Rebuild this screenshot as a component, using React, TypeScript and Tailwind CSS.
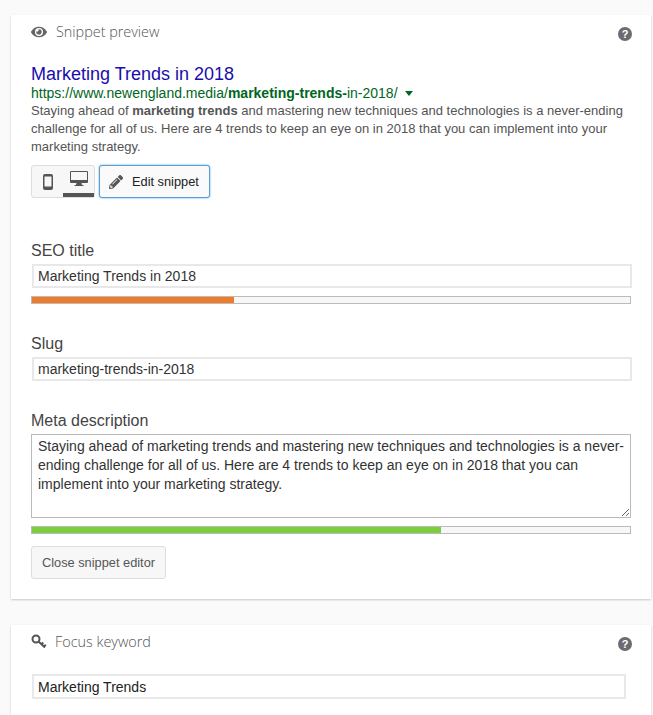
import { FaEye, FaPencilAlt } from 'react-icons/fa';

const description =
  'Staying ahead of marketing trends and mastering new techniques and technologies is a never-ending challenge for all of us. Here are 4 trends to keep an eye on in 2018 that you can implement into your marketing strategy.';

function HelpIcon() {
  return (
    <span className="mt-[4px] -mr-px flex h-[14px] w-[14px] items-center justify-center rounded-full bg-[#6b6b70] font-['Liberation_Sans',sans-serif] text-[11px] leading-none font-bold text-white">
      ?
    </span>
  );
}

function KeyIcon() {
  return (
    <svg width="16" height="15" viewBox="0 0 16 15" fill="none" stroke="#555">
      <circle cx="5" cy="5" r="3.500" strokeWidth="2" />
      <path d="M7.500 7.500 14 13.500M10.500 10.200l1.800-1.700M13 12.500l1.800-1.700" strokeWidth="2" />
    </svg>
  );
}

function ProgressBar({ width, color }: { width: number; color: string }) {
  return (
    <div className="h-2 w-[600px] border border-[#bbb] bg-[#f7f7f7]">
      <div className="h-full" style={{ width, backgroundColor: color }} />
    </div>
  );
}

export default function App() {
  return (
    <div className="flex min-h-[715px] flex-col gap-[26px] overflow-hidden bg-[#fafafa] pt-[15px] pl-[11px] font-['Liberation_Sans',sans-serif] text-[#444]">
      {/* Snippet preview */}
      <section className="h-[584px] w-[640px] bg-white px-5 shadow-[0_1px_2px_rgba(0,0,0,0.2)]">
        <header className="flex h-[34px] items-center justify-between">
          <div className="flex items-center gap-[9px]">
            <FaEye size={16} color="#666" />
            <span className="font-['Open_Sans',sans-serif] text-[14.4px] font-light text-[#555]">Snippet preview</span>
          </div>
          <HelpIcon />
        </header>

        <div className="mt-[15px]">
          <div className="text-lg leading-[21px] text-[#1a0dab]">Marketing Trends in 2018</div>
          <div className="flex items-center text-sm leading-[16px] text-[#006621]">
            <span>
              https://www.newengland.media/<b>marketing-trends-</b>in-2018/
            </span>
            <span className="ml-[7px] h-0 w-0 border-x-[4px] border-t-[5px] border-x-transparent border-t-[#006621]" />
          </div>
          <p className="mt-px text-[13px] leading-[18px] text-[#545454]">
            Staying ahead of <b>marketing trends</b> and mastering new techniques and technologies is a never-ending challenge for all of us. Here are 4 trends to keep an eye on in 2018 that you can implement into your marketing strategy.
          </p>
        </div>

        <div className="mt-[9px] flex gap-1">
          <div className="flex h-[33px] w-16 rounded-[3px] border border-[#ddd] bg-[#f7f7f7]">
            <div className="flex w-[31px] items-center justify-center">
              <svg width="10" height="16" viewBox="0 0 10 16">
                <rect width="10" height="16" rx="2" fill="#555" />
                <rect x="1.500" y="2.500" width="7" height="10" fill="#f7f7f7" />
              </svg>
            </div>
            <div className="flex w-[31px] flex-col items-center justify-between">
              <svg className="mt-[5px]" width="18" height="16" viewBox="0 0 18 16">
                <rect width="18" height="12" rx="1" fill="#555" />
                <rect x="1" y="1" width="16" height="8" fill="#f7f7f7" />
                <path d="M6.500 12h5l.500 2h1.500v1h-9v-1H6z" fill="#555" />
              </svg>
              <div className="h-1 w-[31px] bg-[#555]" />
            </div>
          </div>
          <button className="flex h-[33px] w-[111px] items-center rounded-[3px] border border-[#5b9dd9] bg-[#fafafa] pl-[9px] text-[12.8px] text-[#222] shadow-[0_0_2px_rgba(30,140,190,0.8)]">
            <FaPencilAlt size={14} color="#555" />
            <span className="ml-[9px]">Edit snippet</span>
          </button>
        </div>

        <div className="mt-[44px] text-base leading-[18px]">SEO title</div>
        <input
          readOnly
          value="Marketing Trends in 2018"
          className="mt-[4px] ml-px block h-6 w-[600px] border-2 border-[#e8e8e8] bg-white px-[4px] text-sm text-[#333] outline-none"
        />
        <div className="mt-2">
          <ProgressBar width={202} color="#ee7c2c" />
        </div>

        <div className="mt-[31px] text-base leading-[18px]">Slug</div>
        <input
          readOnly
          value="marketing-trends-in-2018"
          className="mt-[4px] ml-px block h-6 w-[600px] border-2 border-[#e8e8e8] bg-white px-[4px] text-sm text-[#333] outline-none"
        />

        <div className="mt-[31px] text-base leading-[18px]">Meta description</div>
        <textarea
          readOnly
          defaultValue={description}
          className="mt-[4px] block h-[84px] w-[600px] border border-[#bbb] bg-white pt-[2px] pr-[3px] pl-[6px] text-sm leading-[19px] text-[#333] outline-none"
        />
        <div className="mt-2">
          <ProgressBar width={409} color="#7ad03a" />
        </div>

        <button className="mt-3 h-[33px] w-[135px] rounded-[3px] border border-[#ddd] bg-[#f7f7f7] text-[12.8px] text-[#555]">
          Close snippet editor
        </button>
      </section>

      {/* Focus keyword */}
      <section className="w-[640px] flex-1 bg-white px-5 shadow-[0_1px_2px_rgba(0,0,0,0.2)]">
        <header className="flex h-[34px] items-center justify-between">
          <div className="flex items-center gap-2">
            <KeyIcon />
            <span className="font-['Open_Sans',sans-serif] text-[14.4px] font-light text-[#555]">Focus keyword</span>
          </div>
          <HelpIcon />
        </header>
        <input
          readOnly
          value="Marketing Trends"
          className="mt-[15px] ml-px block h-[25px] w-[594px] border-2 border-[#e8e8e8] bg-white px-[4px] text-sm text-[#222] outline-none"
        />
      </section>
    </div>
  );
}
